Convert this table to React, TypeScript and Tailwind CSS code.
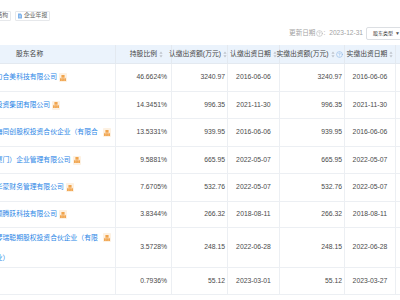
const rows = [
  { name: "深圳市力合美科技有限公司", ratio: "46.6624%", sub: "3240.97", subDate: "2016-06-06", paid: "3240.97", paidDate: "2016-06-06", h: "h-[28px]", icon: true, gap: "ml-[2px]" },
  { name: "佛山市投资集团有限公司", ratio: "14.3451%", sub: "996.35", subDate: "2021-11-30", paid: "996.35", paidDate: "2021-11-30", h: "h-[27px]", icon: true, gap: "ml-[2px]" },
  { name: "深圳前海同创股权投资合伙企业（有限合", ratio: "13.5331%", sub: "939.95", subDate: "2016-06-06", paid: "939.95", paidDate: "2016-06-06", h: "h-[28px]", icon: true, gap: "ml-[5px]" },
  { name: "合美（厦门）企业管理有限公司", ratio: "9.5881%", sub: "665.95", subDate: "2022-05-07", paid: "665.95", paidDate: "2022-05-07", h: "h-[27px]", icon: true, gap: "ml-[2px]" },
  { name: "深圳市华蒙财务管理有限公司", ratio: "7.6705%", sub: "532.76", subDate: "2022-05-07", paid: "532.76", paidDate: "2022-05-07", h: "h-[28px]", icon: true, gap: "ml-[2px]" },
  { name: "深圳市领腾跃科技有限公司", ratio: "3.8344%", sub: "266.32", subDate: "2018-08-11", paid: "266.32", paidDate: "2018-08-11", h: "h-[26px]", icon: true, gap: "ml-[2px]" },
  { name: "珠海横琴瑞聪期股权投资合伙企业（有限", second: "合伙企业）", ratio: "3.5728%", sub: "248.15", subDate: "2022-06-28", paid: "248.15", paidDate: "2022-06-28", h: "h-[40px]", icon: true, gap: "ml-[5px]" },
  { name: "王伟", ratio: "0.7936%", sub: "55.12", subDate: "2023-03-01", paid: "55.12", paidDate: "2023-03-27", h: "h-[27px]", icon: false, gap: "" },
];

const SortIcon = () => (
  <svg width="4" height="7" viewBox="0 0 4 7" className="ml-[2px] shrink-0">
    <path d="M2 0.5 L3.6 2.7 H0.4 Z" fill="#bfc4cc" />
    <path d="M2 6.5 L3.6 4.3 H0.4 Z" fill="#bfc4cc" />
  </svg>
);

const HelpIcon = ({ color = "#8db7e6" }: { color?: string }) => (
  <svg width="7" height="7" viewBox="0 0 24 24" fill="none" stroke={color} strokeWidth="2" strokeLinecap="round" className="shrink-0">
    <circle cx="12" cy="12" r="10" />
    <path d="M9.09 9a3 3 0 0 1 5.83 1c0 2-3 3-3 3" />
    <path d="M12 17h.01" />
  </svg>
);

const TreeIcon = () => (
  <span className="w-[8px] h-[9px] bg-[#fdf1e2] rounded-[1px] flex items-center justify-center shrink-0">
    <svg width="6" height="6" viewBox="0 0 16 16" fill="none" stroke="#f0a045" strokeWidth="2">
      <rect x="5" y="1" width="6" height="4" fill="#f0a045" />
      <path d="M8 5v3M2 8h12M2 8v3M8 8v3M14 8v3" />
      <rect x="0.5" y="11" width="3" height="4" fill="#f0a045" />
      <rect x="6.5" y="11" width="3" height="4" fill="#f0a045" />
      <rect x="12.5" y="11" width="3" height="4" fill="#f0a045" />
    </svg>
  </span>
);

const DocIcon = () => (
  <svg width="4" height="6" viewBox="0 0 8 10" className="shrink-0">
    <path d="M0 0 H5.5 L8 2.5 V10 H0 Z" fill="#7fb3ec" />
    <path d="M2 4.5 H6 M2 6.5 H6" stroke="#ffffff" strokeWidth="0.8" />
  </svg>
);

export default function App() {
  return (
    <div className="w-[400px] h-[300px] overflow-hidden bg-white [font-family:'Liberation_Sans','Noto_Sans_CJK_SC',sans-serif]">
      {/* tabs */}
      <div className="pt-[11px] flex gap-[4px] -ml-[24.2px]">
        <div className="h-[10px] border border-[#e6e8eb] rounded-[1px] px-[2px] flex items-center gap-[2px]">
          <DocIcon />
          <span className="text-[5.8px] leading-none text-[#666]">股权结构</span>
        </div>
        <div className="h-[10px] border border-[#e6e8eb] rounded-[1px] px-[2px] flex items-center gap-[2px]">
          <DocIcon />
          <span className="text-[5.8px] leading-none text-[#666]">企业年报</span>
        </div>
      </div>

      {/* update date + filter */}
      <div className="mt-[6px] w-[408px] h-[13px] flex justify-end items-center">
        <div className="flex items-center text-[6.6px] leading-none text-[#a3a3a3]">
          <span>更新日期</span>
          <span className="ml-[0.5px]"><HelpIcon color="#b5b5b5" /></span>
          <span className="ml-[0.5px]">:</span>
          <span className="ml-[4px]">2023-12-31</span>
        </div>
        <div className="ml-[3px] w-[42px] h-[13px] border border-[#dcdfe3] rounded-[2px] pl-[6px] flex items-center">
          <span className="text-[5px] leading-none text-[#333]">股东类型</span>
          <span className="ml-[2px] text-[5px] leading-none text-[#555]">▼</span>
        </div>
      </div>

      {/* table */}
      <div className="mt-[5px] -ml-[40px] w-[500px] text-[6.8px] text-[#4a4a4a]">
        <div className="flex h-[19px] bg-[#ebf3fc] border-b border-[#e3e9f0] leading-none text-[#444]">
          <div className="w-[156px] border-r border-[#e3e9f0] pl-[56px] flex items-center">股东名称</div>
          <div className="w-[56px] border-r border-[#e3e9f0] pr-[8px] flex items-center justify-end">
            持股比例<SortIcon />
          </div>
          <div className="w-[56px] border-r border-[#e3e9f0] flex items-center justify-end whitespace-nowrap">
            认缴出资额(万元)<SortIcon />
          </div>
          <div className="w-[52px] border-r border-[#e3e9f0] flex items-center justify-center whitespace-nowrap">
            认缴出资日期<SortIcon />
          </div>
          <div className="w-[65px] border-r border-[#e3e9f0] flex items-center justify-end pr-[1px] whitespace-nowrap">
            实缴出资额(万元)<SortIcon />
            <span className="ml-[1.5px]"><HelpIcon /></span>
          </div>
          <div className="w-[51px] border-r border-[#e3e9f0] flex items-center justify-center whitespace-nowrap">
            实缴出资日期<SortIcon />
          </div>
          <div className="w-[60px]" />
        </div>

        {rows.map((r, i) => (
          <div key={i} className={`flex ${r.h} border-b border-[#eceff3] leading-none`}>
            <div className="w-[156px] border-r border-[#eceff3] pl-[15.4px] flex items-center whitespace-nowrap text-[#2a86e6]">
              {r.second ? (
                <div className="flex flex-col leading-[20px]">
                  <div className="flex items-center">
                    <span>{r.name}</span>
                    {r.icon && <span className={r.gap}><TreeIcon /></span>}
                  </div>
                  <span>{r.second}</span>
                </div>
              ) : (
                <>
                  <span>{r.name}</span>
                  {r.icon && <span className={r.gap}><TreeIcon /></span>}
                </>
              )}
            </div>
            <div className="w-[56px] border-r border-[#eceff3] pr-[4px] flex items-center justify-end">{r.ratio}</div>
            <div className="w-[56px] border-r border-[#eceff3] pr-[2px] flex items-center justify-end">{r.sub}</div>
            <div className="w-[52px] border-r border-[#eceff3] flex items-center justify-center">{r.subDate}</div>
            <div className="w-[65px] border-r border-[#eceff3] pr-[2px] flex items-center justify-end">{r.paid}</div>
            <div className="w-[51px] border-r border-[#eceff3] flex items-center justify-center">{r.paidDate}</div>
            <div className="w-[60px]" />
          </div>
        ))}
      </div>
    </div>
  );
}
